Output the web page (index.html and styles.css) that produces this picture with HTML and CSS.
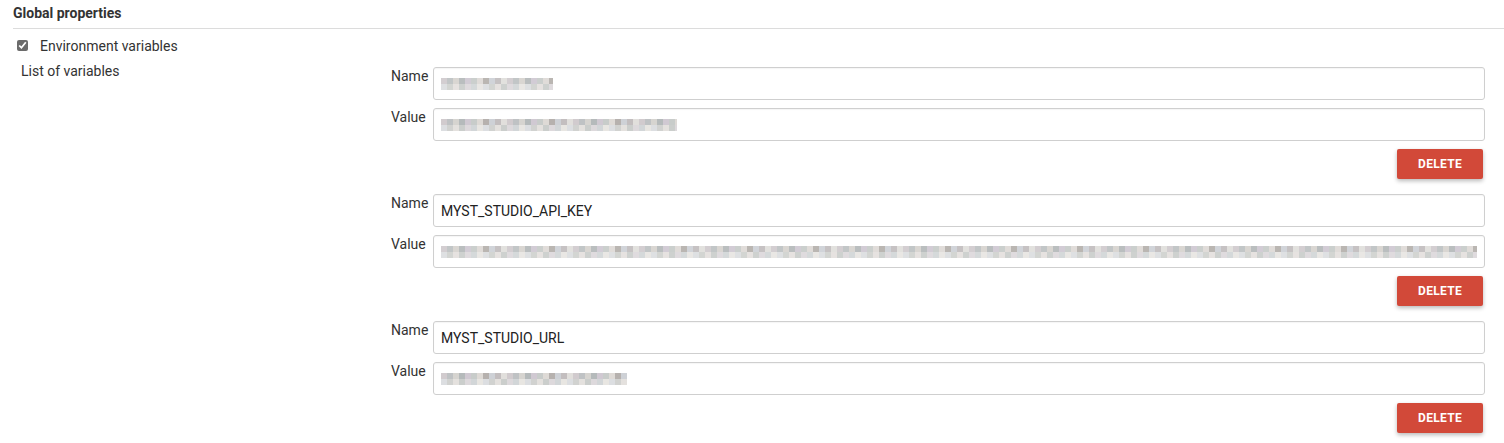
FILE: index.html
```html
<!DOCTYPE html>
<html>
<head>
<meta charset="utf-8">
<link rel="stylesheet" href="styles.css">
</head>
<body>
<div class="section-title">Global properties</div>
<label class="check-row"><input type="checkbox" class="cb" checked> <span>Environment variables</span></label>
<div class="props">
  <div class="props-label">List of variables</div>
  <div class="vars">
    <div class="var">
      <div class="lbl">Name</div>
      <div class="field"><span class="blur" style="width:112px"></span></div>
      <div class="lbl">Value</div>
      <div class="field"><span class="blur b2" style="width:236px"></span></div>
      <div class="actions"><button class="del">DELETE</button></div>
    </div>
    <div class="var">
      <div class="lbl">Name</div>
      <div class="field">MYST_STUDIO_API_KEY</div>
      <div class="lbl">Value</div>
      <div class="field"><span class="blur b3" style="width:1036px"></span></div>
      <div class="actions"><button class="del">DELETE</button></div>
    </div>
    <div class="var">
      <div class="lbl">Name</div>
      <div class="field">MYST_STUDIO_URL</div>
      <div class="lbl">Value</div>
      <div class="field"><span class="blur b4" style="width:186px"></span></div>
      <div class="actions"><button class="del">DELETE</button></div>
    </div>
  </div>
</div>
</body>
</html>
```
FILE: styles.css
```css
* { box-sizing: border-box; }
body {
  margin: 0;
  background: #fff;
  font-family: Roboto, "Liberation Sans", sans-serif;
  font-size: 14px;
  color: #333;
}
.section-title {
  margin-left: 13px;
  height: 29px;
  padding-top: 5px;
  font-weight: bold;
  font-size: 14px;
  line-height: 16px;
  color: #333;
  border-bottom: 1px solid #dcdcdc;
}
.check-row {
  display: flex;
  align-items: center;
  height: 34px;
  padding-left: 17px;
}
.cb {
  margin: 0 12px 2px 0;
  width: 11px;
  height: 11px;
  accent-color: #6b6b6b;
}
.props {
  display: flex;
}
.props-label {
  width: 391px;
  padding-left: 21px;
  line-height: 16px;
}
.vars {
  flex: 1;
  margin-right: 19px;
  padding-top: 4px;
}
.var {
  display: grid;
  grid-template-columns: 42px 1fr;
  row-gap: 8px;
  margin-bottom: 15px;
}
.lbl {
  padding-top: 1px;
  line-height: 16px;
  color: #333;
}
.field {
  height: 33px;
  border: 1px solid #cfcfcf;
  border-radius: 3px;
  padding: 0 7px;
  display: flex;
  align-items: center;
  font-size: 14px;
  color: #222;
  box-shadow: inset 0 1px 1px rgba(0,0,0,0.04);
}
.blur {
  display: block;
  height: 12px;
  opacity: 0.8;
  background:
    repeating-linear-gradient(90deg,
      #c9c2c6 0 6px, #b4b8ba 6px 12px, #d0cdc8 12px 18px, #a9aeb0 18px 24px,
      #c8c0cb 24px 30px, #bfc4c1 30px 36px, #d9d4d0 36px 42px, #aaa4a0 42px 48px,
      #c6cad0 48px 54px, #b9b3b5 54px 60px, #dcdad6 60px 66px) 0 0 / 100% 6px no-repeat,
    repeating-linear-gradient(90deg,
      #d7d9dc 0 6px, #c9cbc8 6px 12px, #e0dcd9 12px 18px, #c2c6c4 18px 24px,
      #d8d3d6 24px 30px, #cbd0d2 30px 36px, #e4e2de 36px 42px) 0 6px / 100% 6px no-repeat;
}
.b2 { opacity: 0.85; }
.b3 { opacity: 0.8; }
.b4 { opacity: 0.85; }
.actions {
  grid-column: 1 / -1;
  display: flex;
  justify-content: flex-end;
  padding-right: 2px;
}
.del {
  width: 86px;
  height: 30px;
  border: 0;
  border-radius: 2px;
  background: #d24939;
  color: #fff;
  font-family: Roboto, "Liberation Sans", sans-serif;
  font-weight: bold;
  font-size: 12px;
  letter-spacing: 0.3px;
  box-shadow: 0 2px 4px rgba(0,0,0,0.28);
  cursor: pointer;
}
```
